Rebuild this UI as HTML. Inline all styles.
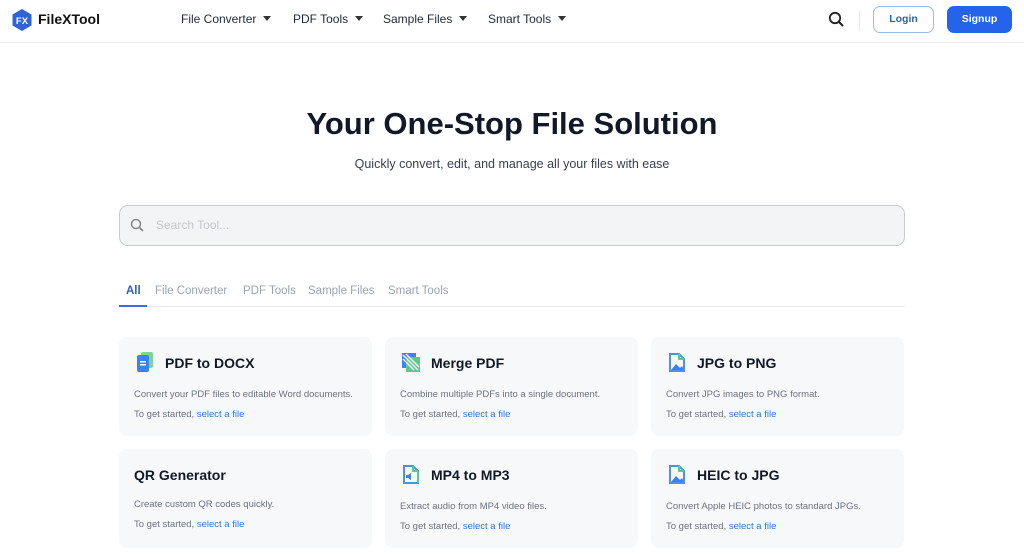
<!DOCTYPE html>
<html><head><meta charset="utf-8"><style>
*{margin:0;padding:0;box-sizing:border-box}
body{width:1024px;height:557px;overflow:hidden;background:#fff;font-family:"Liberation Sans",sans-serif;color:#1f2937;position:relative}
.a{position:absolute}
.hdr{left:0;top:0;width:1024px;height:43px;border-bottom:1px solid #eef0f3}
.nav{font-size:12px;color:#1f2937;top:12px}
.nav:after{content:"";display:inline-block;margin-left:7px;border-left:4px solid transparent;border-right:4px solid transparent;border-top:5px solid #333;vertical-align:2px}
.card{background:#f7f8fa;border-radius:8px;width:253px;height:99px}
.card h3{position:absolute;left:46px;top:18px;font-size:14px;font-weight:700;color:#111827}
.card .d{position:absolute;left:15px;top:52px;font-size:9.5px;color:#6b7280}
.card .s{position:absolute;left:15px;top:72px;font-size:9.5px;color:#6b7280}
.card .s span{color:#3b6fd8}
.card svg{position:absolute;left:16px;top:14px}
.tab{top:285px;font-size:11.5px;color:#9ca3af}
</style></head><body>
<div class="a hdr"></div>
<svg class="a" style="left:11px;top:9px" width="22" height="22" viewBox="0 0 22 22"><polygon points="11,0 20.5,5.5 20.5,16.5 11,22 1.5,16.5 1.5,5.5" fill="#2f63d6"/><text x="11" y="15" font-size="9.5" font-family="Liberation Sans" fill="#fff" text-anchor="middle" font-weight="700">FX</text></svg>
<div class="a" style="left:38px;top:11px;font-size:14px;font-weight:700;color:#111">FileXTool</div>
<div class="a nav" style="left:181px">File Converter</div>
<div class="a nav" style="left:293px">PDF Tools</div>
<div class="a nav" style="left:383px">Sample Files</div>
<div class="a nav" style="left:488px">Smart Tools</div>
<svg class="a" style="left:828px;top:11px" width="17" height="17" viewBox="0 0 17 17"><circle cx="7" cy="7" r="5.2" fill="none" stroke="#222" stroke-width="1.8"/><line x1="11" y1="11" x2="15" y2="15" stroke="#222" stroke-width="2"/></svg>
<div class="a" style="left:859px;top:11px;width:1px;height:20px;background:#e5e7eb"></div>
<div class="a" style="left:873px;top:6px;width:61px;height:27px;border:1.5px solid #9fb6e6;border-radius:7px;font-size:10.5px;font-weight:700;color:#2f5fc4;text-align:center;line-height:24px">Login</div>
<div class="a" style="left:947px;top:6px;width:65px;height:27px;background:#2563eb;border-radius:7px;font-size:10.5px;font-weight:700;color:#fff;text-align:center;line-height:27px">Signup</div>
<div class="a" style="left:0;width:1024px;top:106px;text-align:center;font-size:31px;font-weight:700;color:#111827">Your One-Stop File Solution</div>
<div class="a" style="left:0;width:1024px;top:157px;text-align:center;font-size:12.5px;font-weight:500;color:#374151">Quickly convert, edit, and manage all your files with ease</div>
<div class="a" style="left:119px;top:205px;width:786px;height:41px;border:1px solid #c9ccd1;border-radius:9px;background:#f3f4f6"></div>
<svg class="a" style="left:130px;top:218px" width="15" height="15" viewBox="0 0 15 15"><circle cx="6" cy="6" r="4.5" fill="none" stroke="#888" stroke-width="1.5"/><line x1="9.5" y1="9.5" x2="13" y2="13" stroke="#888" stroke-width="1.6"/></svg>
<div class="a" style="left:156px;top:218px;font-size:12px;color:#c4c7cc">Search Tool...</div>
<div class="a tab" style="left:126px;color:#2f5fc4;font-weight:700">All</div>
<div class="a tab" style="left:155px">File Converter</div>
<div class="a tab" style="left:243px">PDF Tools</div>
<div class="a tab" style="left:308px">Sample Files</div>
<div class="a tab" style="left:388px">Smart Tools</div>
<div class="a" style="left:119px;top:306px;width:786px;height:1px;background:#e5e7eb"></div>
<div class="a" style="left:119px;top:305px;width:28px;height:2px;background:#3b6fd8"></div>

<div class="a card" style="left:119px;top:337px"><svg width="20" height="22" viewBox="0 0 20 22"><rect x="6" y="1" width="12" height="16" rx="2" fill="#7dd3a0"/><rect x="2" y="4" width="12" height="17" rx="2" fill="#3b82f6"/><rect x="5" y="10" width="6" height="1.5" fill="#fff"/><rect x="5" y="13" width="6" height="1.5" fill="#fff"/></svg><h3>PDF to DOCX</h3><div class="d">Convert your PDF files to editable Word documents.</div><div class="s">To get started, <span>select a file</span></div></div>
<div class="a card" style="left:385px;top:337px"><svg width="20" height="22" viewBox="0 0 20 22"><rect x="1" y="2" width="14" height="15" fill="#3b82f6"/><rect x="5" y="6" width="14" height="15" fill="#5cc88a"/><path d="M2 4L17 19M5 3L18 16M2 8L13 19" stroke="#fff" stroke-width="1.3"/></svg><h3>Merge PDF</h3><div class="d">Combine multiple PDFs into a single document.</div><div class="s">To get started, <span>select a file</span></div></div>
<div class="a card" style="left:651px;top:337px"><svg width="20" height="22" viewBox="0 0 20 22"><path d="M3 3h9l5 5v12H3z" fill="none" stroke="#4f8fea" stroke-width="2"/><path d="M12 3v5h5" fill="none" stroke="#5cc88a" stroke-width="2"/><path d="M4 19l5-6 4 4 2-2 2 4z" fill="#3b82f6"/></svg><h3>JPG to PNG</h3><div class="d">Convert JPG images to PNG format.</div><div class="s">To get started, <span>select a file</span></div></div>
<div class="a card" style="left:119px;top:449px"><h3 style="left:15px">QR Generator</h3><div class="d" style="top:50px">Create custom QR codes quickly.</div><div class="s" style="top:70px">To get started, <span>select a file</span></div></div>
<div class="a card" style="left:385px;top:449px"><svg width="20" height="22" viewBox="0 0 20 22"><path d="M3 3h9l5 5v12H3z" fill="none" stroke="#4f8fea" stroke-width="2"/><path d="M12 3v5h5M17 8v12" fill="none" stroke="#5cc88a" stroke-width="2"/><path d="M5 12h2l3-2v7l-3-2H5z" fill="#3b82f6"/></svg><h3>MP4 to MP3</h3><div class="d">Extract audio from MP4 video files.</div><div class="s">To get started, <span>select a file</span></div></div>
<div class="a card" style="left:651px;top:449px"><svg width="20" height="22" viewBox="0 0 20 22"><path d="M3 3h9l5 5v12H3z" fill="none" stroke="#4f8fea" stroke-width="2"/><path d="M12 3v5h5" fill="none" stroke="#5cc88a" stroke-width="2"/><path d="M4 19l5-6 4 4 2-2 2 4z" fill="#3b82f6"/></svg><h3>HEIC to JPG</h3><div class="d">Convert Apple HEIC photos to standard JPGs.</div><div class="s">To get started, <span>select a file</span></div></div>
</body></html>
